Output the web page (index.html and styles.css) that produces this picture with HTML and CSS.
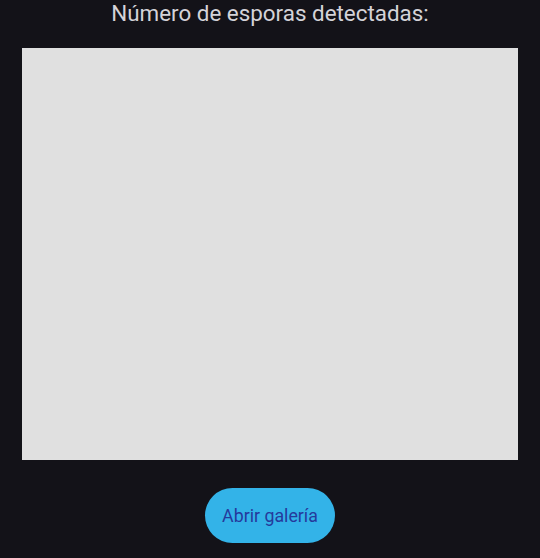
FILE: index.html
```html
<!DOCTYPE html>
<html lang="es">
<head>
<meta charset="utf-8">
<link rel="stylesheet" href="styles.css">
</head>
<body>
<main class="screen">
  <h1 class="title">Número de esporas detectadas:</h1>
  <div class="preview"></div>
  <div class="actions">
    <button class="btn">Abrir galería</button>
  </div>
</main>
</body>
</html>
```
FILE: styles.css
```css
html, body {
  margin: 0;
  padding: 0;
  background: #131218;
}
.screen {
  width: 540px;
  height: 558px;
  display: flex;
  flex-direction: column;
  align-items: center;
  font-family: Roboto, "Noto Sans", sans-serif;
}
.title {
  margin: 0;
  height: 48px;
  line-height: 26px;
  font-size: 22.4px;
  font-weight: 400;
  color: #d4d3d8;
  box-sizing: border-box;
}
.preview {
  width: 496px;
  height: 412px;
  background: #e0e0e0;
}
.actions {
  padding-top: 28px;
}
.btn {
  width: 130px;
  height: 55px;
  border: none;
  border-radius: 28px;
  background: #33b3e8;
  color: #253a9c;
  font-family: Roboto, "Noto Sans", sans-serif;
  font-size: 17.8px;
  padding: 0;
}
```
